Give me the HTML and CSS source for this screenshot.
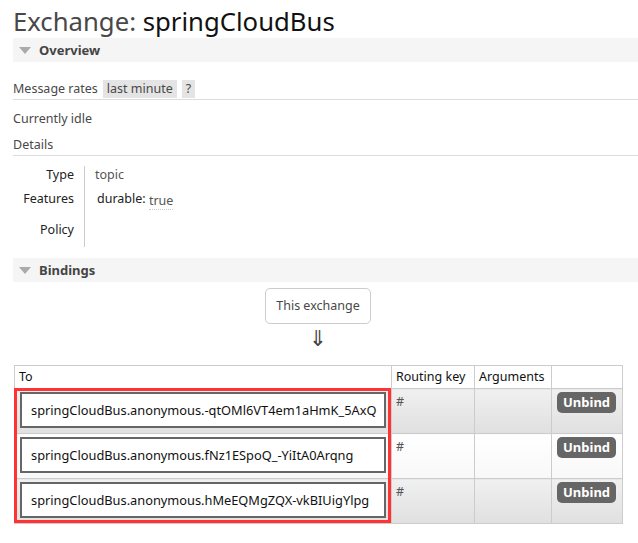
FILE: index.html
```html
<!DOCTYPE html>
<html>
<head>
<meta charset="utf-8">
<link rel="stylesheet" href="styles.css">
</head>
<body>
<div class="page">
  <h1 class="title"><span class="title-pre">Exchange:</span> <span class="title-name">springCloudBus</span></h1>

  <div class="section">
    <h2 class="sec-head"><span class="tri"></span>Overview</h2>
    <div class="rates-row">
      <span class="rates-label">Message rates</span>
      <span class="pill">last minute</span>
      <span class="pill">?</span>
    </div>
    <p class="idle">Currently idle</p>
    <div class="details-head">Details</div>
    <div class="facts">
      <div class="facts-keys">
        <div class="fk fk-type">Type</div>
        <div class="fk fk-feat">Features</div>
        <div class="fk fk-pol">Policy</div>
      </div>
      <div class="facts-vals">
        <div class="fv fv-type">topic</div>
        <div class="fv fv-feat"><span class="feat-key">durable:</span> <abbr class="feat-val">true</abbr></div>
        <div class="fv fv-pol"></div>
      </div>
    </div>
  </div>

  <div class="section">
    <h2 class="sec-head"><span class="tri"></span>Bindings</h2>
    <div class="flow">
      <div class="this-ex">This exchange</div>
      <div class="arrow">&#8659;</div>
    </div>
    <div class="table-wrap">
      <table class="list">
        <colgroup>
          <col class="col-to"><col class="col-rk"><col class="col-args"><col class="col-act">
        </colgroup>
        <thead>
          <tr><th>To</th><th>Routing key</th><th>Arguments</th><th></th></tr>
        </thead>
        <tbody>
          <tr class="alt1">
            <td class="c-to"><div class="qbox">springCloudBus.anonymous.-qtOMl6VT4em1aHmK_5AxQ</div></td>
            <td class="c-rk">#</td><td class="c-args"></td>
            <td class="c-act"><span class="btn">Unbind</span></td>
          </tr>
          <tr class="alt2">
            <td class="c-to"><div class="qbox">springCloudBus.anonymous.fNz1ESpoQ_-YiItA0Arqng</div></td>
            <td class="c-rk">#</td><td class="c-args"></td>
            <td class="c-act"><span class="btn">Unbind</span></td>
          </tr>
          <tr class="alt1">
            <td class="c-to"><div class="qbox">springCloudBus.anonymous.hMeEQMgZQX-vkBIUigYlpg</div></td>
            <td class="c-rk">#</td><td class="c-args"></td>
            <td class="c-act"><span class="btn">Unbind</span></td>
          </tr>
        </tbody>
      </table>
      <div class="highlight"></div>
    </div>
  </div>
</div>
</body>
</html>
```

FILE: styles.css
```css
html, body {
  margin: 0;
  padding: 0;
  background: #fff;
}
body {
  font-family: "Noto Sans", "Open Sans", sans-serif;
  font-size: 12.5px;
  color: #484848;
}
.page {
  padding-left: 13px;
  overflow: hidden;
}
.title {
  margin: 0;
  padding-top: 5px;
  height: 33px;
  font-size: 25.7px;
  font-weight: normal;
  line-height: 33px;
  white-space: nowrap;
}
.title-pre { color: #484848; }
.title-name { color: #111; }

.sec-head {
  margin: 0;
  height: 24px;
  background: #f5f5f5;
  font-size: 13px;
  font-weight: bold;
  color: #444;
  line-height: 24px;
  display: flex;
  align-items: center;
}
.tri {
  width: 0;
  height: 0;
  border-left: 6px solid transparent;
  border-right: 6px solid transparent;
  border-top: 7px solid #aaa;
  margin-left: 6px;
  margin-right: 8px;
}

.rates-row {
  margin-top: 18px;
  height: 18px;
  border-bottom: 1px solid #ddd;
  padding-bottom: 1px;
  display: flex;
  align-items: center;
  gap: 5px;
  line-height: 18px;
}
.pill {
  background: #e4e4e4;
  padding: 0 4px;
  height: 18px;
  color: #484848;
}

.idle {
  margin: 9px 0 0;
  line-height: 19px;
}
.details-head {
  margin-top: 7px;
  line-height: 20px;
  border-bottom: 1px solid #ddd;
}

.facts {
  display: flex;
  margin-top: 10px;
}
.facts-keys {
  width: 61px;
  text-align: right;
  color: #222;
  padding-right: 10px;
  border-right: 1px solid #ccc;
}
.facts-vals {
  padding-left: 10px;
}
.fk, .fv {
  line-height: 18px;
}
.fk-type, .fv-type { height: 24px; }
.fk-feat, .fv-feat { height: 31px; }
.fk-pol, .fv-pol { height: 26px; }
.fv-type { color: #555; }
.feat-key { color: #222; margin-left: 2px; }
.feat-val {
  color: #555;
  text-decoration: none;
  border-bottom: 1px dotted #ccc;
  position: relative;
  top: 2px;
}

.section + .section .sec-head {
  margin-top: 11px;
}

.flow {
  display: flex;
  flex-direction: column;
  align-items: center;
  width: 610px;
}
.this-ex {
  margin-top: 6px;
  height: 34px;
  padding: 0 10px;
  border: 1px solid #ccc;
  border-radius: 5px;
  line-height: 34px;
  color: #484848;
}
.arrow {
  font-family: "DejaVu Sans", sans-serif;
  font-size: 22px;
  line-height: 24px;
  color: #444;
  margin-top: 3px;
}

.table-wrap {
  position: relative;
  margin-top: 14px;
  margin-left: 1px;
  width: 608px;
}
.list {
  border-collapse: collapse;
  width: 608px;
  table-layout: fixed;
}
.col-to { width: 377px; }
.col-rk { width: 83px; }
.col-args { width: 77px; }
.col-act { width: 71px; }
.list th, .list td {
  border: 1px solid #ccc;
  text-align: left;
  vertical-align: top;
  box-sizing: border-box;
}
.list th {
  font-weight: normal;
  color: #111;
  height: 23px;
  padding: 0 4px;
  line-height: 22px;
  background: #fff;
  white-space: nowrap;
}
.list td {
  padding: 3px 5px 5px;
  height: 44px;
}
.list td.c-rk { color: #555; padding-top: 4px; padding-left: 4px; }
.list td.c-act { padding-left: 5px; }
.alt1 td {
  background: linear-gradient(#f0f0f0, #e0e0e0);
}
.alt2 td {
  background: linear-gradient(#fff, #f8f8f8);
}
.qbox {
  height: 32px;
  border: 2px solid #666;
  background: #fff;
  padding-left: 9px;
  line-height: 32px;
  color: #111;
  font-size: 12.8px;
  white-space: nowrap;
  overflow: hidden;
}
.btn {
  display: inline-block;
  background: #666;
  color: #fff;
  border-radius: 5px;
  padding: 0 6px;
  height: 21px;
  line-height: 21px;
  font-size: 13px;
  font-weight: bold;
}
.highlight {
  position: absolute;
  left: 0;
  top: 23px;
  width: 371px;
  height: 129px;
  border: 3px solid #ff3333;
  pointer-events: none;
}
```
